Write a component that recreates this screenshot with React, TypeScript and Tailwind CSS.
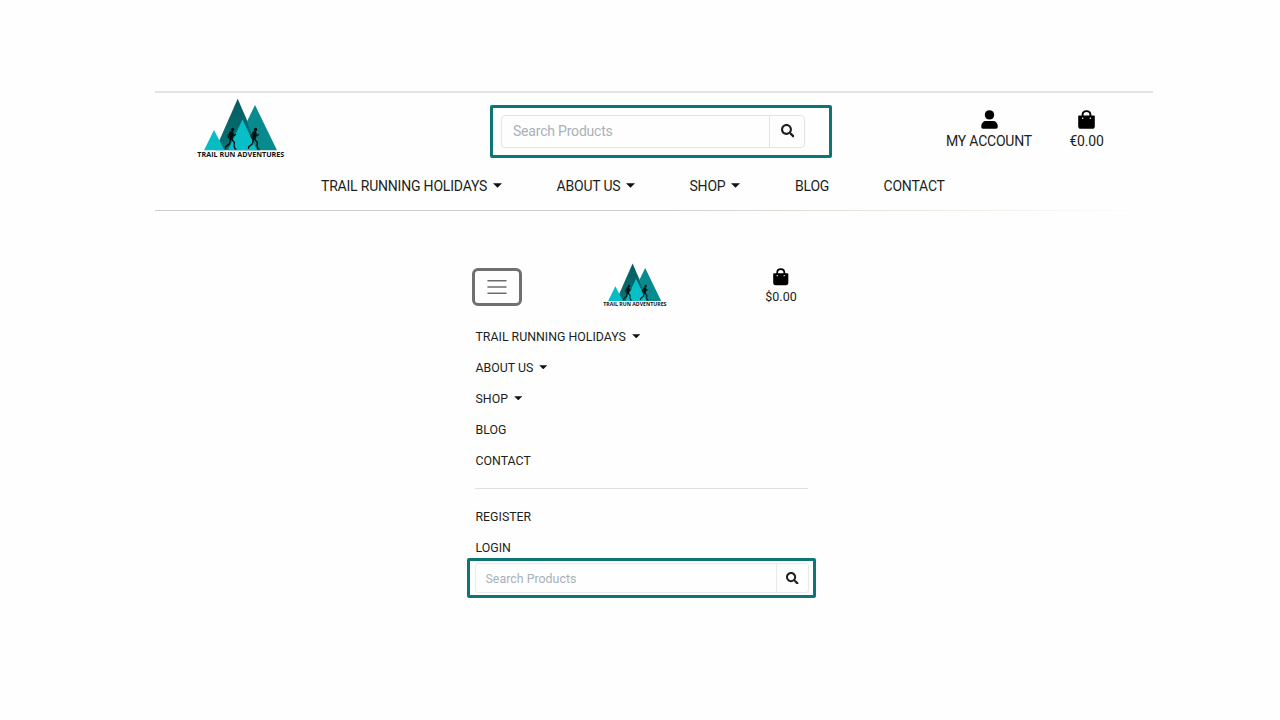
import React from "react";
import { FaSearch } from "react-icons/fa";

function Runner({ x }: { x: number }) {
  return (
    <g transform={`translate(${x} 29.5)`} fill="#061012" stroke="#061012" strokeLinecap="round" strokeLinejoin="round">
      <circle cx="7.6" cy="2" r="1.7" stroke="none" />
      <path d="M5.2 4.2 L7.8 4 L8.2 8 L7.2 12 L4.6 12 Z" strokeWidth="0.8" />
      <path d="M5.4 5 L2.8 8 L3.6 10.2 M7.6 5.6 L9 8.4 L10.6 7" fill="none" strokeWidth="1.1" />
      <path d="M6.6 11.8 L9.4 15 L9 18.4 L10 21.4 L11 21.4" fill="none" strokeWidth="1.4" />
      <path d="M5.4 12 L4.4 16.4 L0.6 19.4 L0.6 20.8" fill="none" strokeWidth="1.4" />
    </g>
  );
}

function Logo({ className, id }: { className: string; id: string }) {
  return (
    <svg viewBox="0 0 88 61" className={className} role="img" aria-label="Trail Run Adventures">
      <defs>
        <linearGradient id={id} x1="0" y1="0" x2="0" y2="1">
          <stop offset="0" stopColor="#035c60" />
          <stop offset="1" stopColor="#0a7377" />
        </linearGradient>
      </defs>
      <polygon points="40.7,0.8 63,52.2 18,52.2" fill={`url(#${id})`} />
      <polygon points="58,7 80,52.2 60,52.2 50,23.5" fill="#078b8f" />
      <polygon points="17,32 27.5,52.2 7,52.2" fill="#08bcc4" />
      <polygon points="45.5,21.5 60,52.2 31,52.2" fill="#08bfc8" />
      <Runner x={28} />
      <Runner x={51} />
      <text x="0.3" y="59.2" textLength="87" lengthAdjust="spacingAndGlyphs" className="font-['Open_Sans',sans-serif] text-[6.8px] font-bold" fill="#101314">
        TRAIL RUN ADVENTURES
      </text>
    </svg>
  );
}

function Caret({ className }: { className: string }) {
  return (
    <svg viewBox="0 0 9 5" className={className} aria-hidden="true">
      <path d="M0 0.3H9L4.5 4.8Z" fill="#111" />
    </svg>
  );
}

function UserIcon({ className }: { className: string }) {
  return (
    <svg viewBox="0 0 17 19" className={className} aria-hidden="true">
      <circle cx="8.5" cy="4.9" r="4.7" />
      <path d="M0.3 16.2C0.3 13 2.4 11 5.2 11H11.8C14.6 11 16.7 13 16.7 16.2V17C16.7 18 16 18.7 15 18.7H2C1 18.7 0.3 18 0.3 17Z" />
    </svg>
  );
}

function BagIcon({ className }: { className: string }) {
  return (
    <svg viewBox="0 0 17 19" className={className} aria-hidden="true">
      <path d="M4.6 7V4.8C4.6 2.6 6.3 1.1 8.5 1.1S12.4 2.6 12.4 4.8V7" fill="none" stroke="#000" strokeWidth="1.9" />
      <path d="M1.2 5.6H15.8C16.4 5.6 16.8 6 16.8 6.6V16.2C16.8 17.8 15.8 18.8 14.3 18.8H2.7C1.2 18.8 0.2 17.8 0.2 16.2V6.6C0.2 6 0.6 5.6 1.2 5.6Z" />
      <circle cx="4.7" cy="8.3" r="0.75" fill="#fff" />
      <circle cx="12.3" cy="8.3" r="0.75" fill="#fff" />
    </svg>
  );
}

const desktopNav = [
  { label: "TRAIL RUNNING HOLIDAYS", caret: true, cell: "w-[235.5px]" },
  { label: "ABOUT US", caret: true, cell: "w-[133px]" },
  { label: "SHOP", caret: true, cell: "w-[105.5px]" },
  { label: "BLOG", caret: false, cell: "w-[88.5px]" },
  { label: "CONTACT", caret: false, cell: "w-[62px]" },
];

const mobileNav = [
  { label: "TRAIL RUNNING HOLIDAYS", caret: true },
  { label: "ABOUT US", caret: true },
  { label: "SHOP", caret: true },
  { label: "BLOG", caret: false },
  { label: "CONTACT", caret: false },
];

export default function App() {
  return (
    <div className="h-[720px] w-[1280px] overflow-hidden bg-[#fefefe] pt-[91px] font-[Roboto,sans-serif] text-[#1c1e20]">
      <header className="ml-[155px] h-[120px] w-[998px]">
        <div className="h-[2px] bg-[#e3e3e3]" />
        <div className="flex h-[75px] items-start">
          <Logo id="peak-large" className="ml-[42px] mt-[5px] h-[61px] w-[88px] shrink-0" />
          <div className="ml-[205px] mt-[12px] flex h-[53px] w-[342px] shrink-0 rounded-[2px] border-[3px] border-[#0c7677] pl-[8px] pt-[6.5px]">
            <div className="flex h-[33px] w-[304px] rounded-[4px] border border-[#e3e4e6]">
              <div className="flex flex-1 items-center pl-[11px] text-[14px] tracking-[-0.2px] text-[#a9b1b9]">Search Products</div>
              <button className="flex w-[35px] items-center justify-center border-l border-[#e3e4e6] pl-px" aria-label="Search">
                <FaSearch className="size-[13.5px]" />
              </button>
            </div>
          </div>
          <div className="ml-[107px] mt-[17px] flex w-[100px] flex-col items-center">
            <UserIcon className="h-[19px] w-[17px] text-black" />
            <span className="mt-[3px] whitespace-nowrap text-[14px] leading-[18px] tracking-[-0.22px]">MY ACCOUNT</span>
          </div>
          <div className="ml-[17.5px] mt-[17px] flex w-[60px] flex-col items-center">
            <BagIcon className="h-[19px] w-[17px] text-black" />
            <span className="mt-[3px] whitespace-nowrap text-[14px] leading-[18px] tracking-[-0.2px]">€0.00</span>
          </div>
        </div>
        <nav className="flex h-[42px] pl-[166px] pt-[9px]">
          {desktopNav.map((item) => (
            <a key={item.label} className={`flex h-[18px] shrink-0 items-center whitespace-nowrap text-[14px] tracking-[-0.2px] ${item.cell}`}>
              {item.label}
              {item.caret && <Caret className="mb-[1px] ml-[6px] h-[5px] w-[9px]" />}
            </a>
          ))}
        </nav>
        <div className="h-px bg-linear-to-r from-[#cfcfcf] from-50% via-[#e6e4d8] via-70% to-[#fefefe]" />
      </header>

      <section className="ml-[467px] mt-[52px] w-[349px]">
        <div className="flex h-[58px] items-start">
          <button className="ml-[5px] mt-[5px] flex h-[38px] w-[50px] shrink-0 flex-col items-center justify-center rounded-[6px] border-[3px] border-[#707070]" aria-label="Menu">
            <svg viewBox="0 0 20 16" className="h-[16px] w-[20px]" aria-hidden="true">
              <path d="M1 1.75H19M1 8H19M1 14.25H19" stroke="#6c6c6c" strokeWidth="1.5" strokeLinecap="round" />
            </svg>
          </button>
          <Logo id="peak-small" className="ml-[81px] h-[44.4px] w-[64px] shrink-0" />
          <div className="ml-[84px] mt-[5px] flex w-[60px] flex-col items-center">
            <BagIcon className="h-[17.5px] w-[15.5px] text-black" />
            <span className="mt-[3px] text-[12.5px] leading-[16px]">$0.00</span>
          </div>
        </div>
        <nav className="flex flex-col pl-[8.5px] pt-px">
          {mobileNav.map((item) => (
            <a key={item.label} className="flex h-[31px] items-center text-[12.35px]">
              {item.label}
              {item.caret && <Caret className="mb-[3px] ml-[6px] h-[4.5px] w-[8.5px]" />}
            </a>
          ))}
        </nav>
        <div className="ml-[8px] mr-[8px] mt-[11px] h-px bg-[#e0e0e0]" />
        <div className="flex h-[69px] flex-col pl-[8.5px] pt-[12.5px] text-[12.35px]">
          <a className="flex h-[31px] shrink-0 items-center">REGISTER</a>
          <a className="flex h-[31px] shrink-0 items-center">LOGIN</a>
        </div>
        <div className="flex h-[40px] w-[349px] rounded-[2px] border-[3px] border-[#0c7677] pl-[5px] pt-[2px]">
          <div className="flex h-[30px] w-[334px] rounded-[3px] border border-[#e9eaec]">
            <div className="flex flex-1 items-center pl-[9.5px] pt-[2px] text-[12.4px] text-[#a9b1b9]">Search Products</div>
            <button className="flex w-[32px] items-center justify-center border-l border-[#e9eaec]" aria-label="Search">
              <FaSearch className="size-[12.5px]" />
            </button>
          </div>
        </div>
      </section>
    </div>
  );
}
